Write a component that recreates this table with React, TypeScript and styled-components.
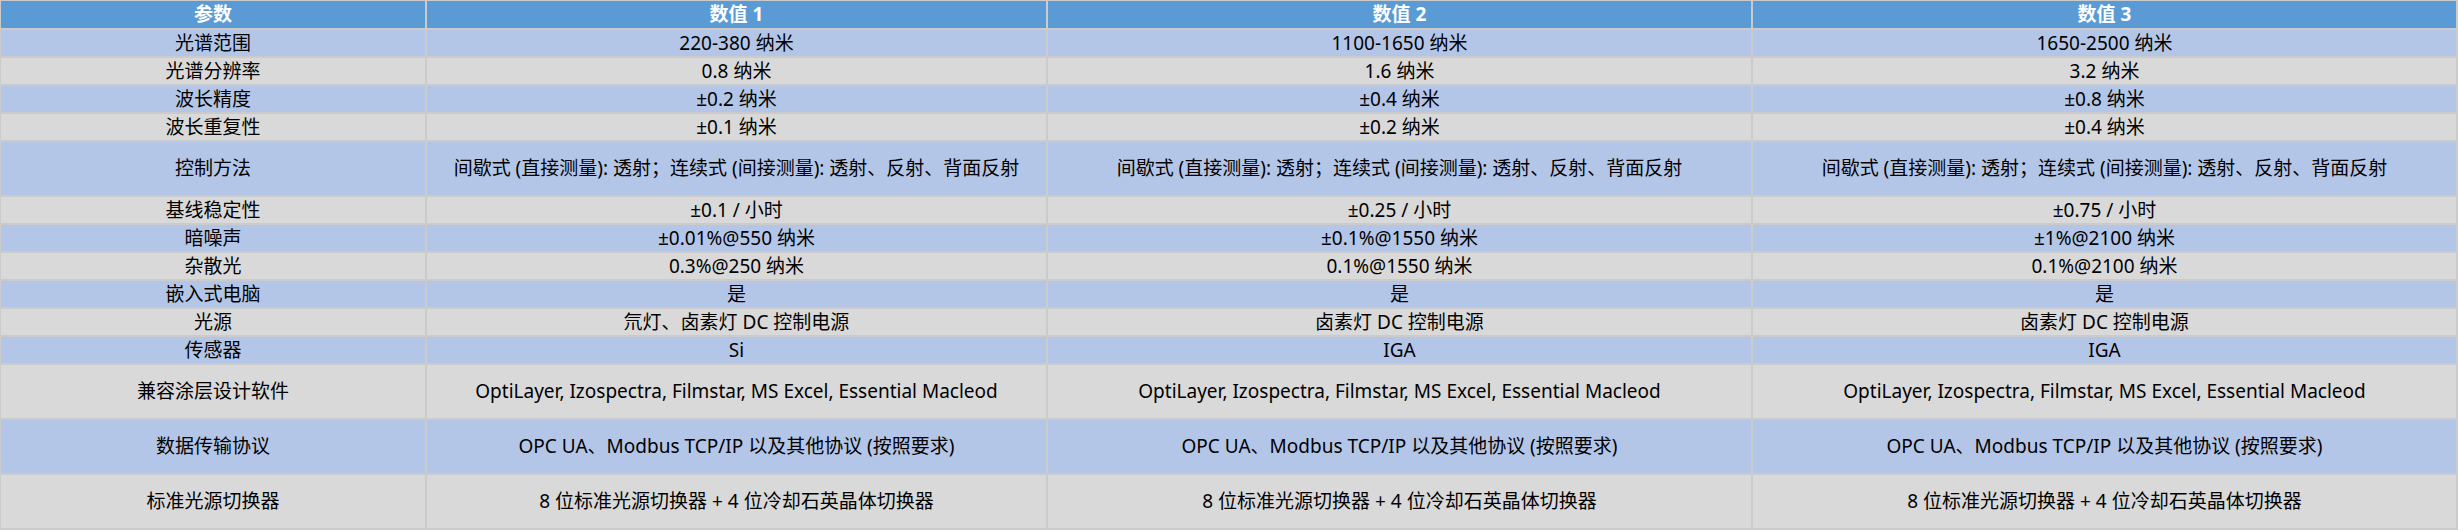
import styled, { createGlobalStyle } from "styled-components";

const GlobalStyle = createGlobalStyle`
  html, body {
    margin: 0;
    padding: 0;
    background: #ffffff;
  }
`;

const COLUMNS = "424px 619px 703px 703px";

const Table = styled.div`
  display: flex;
  flex-direction: column;
  gap: 2px;
  width: 2458px;
  box-sizing: border-box;
  padding: 1px 2px 2px 1px;
  background-color: #cbcbcb;
  font-family: "Noto Sans", "Noto Sans CJK SC", sans-serif;
  font-size: 19px;
  color: #000000;
`;

type rowProps = {
  height: number;
};

const Row = styled.div<rowProps>`
  display: grid;
  grid-template-columns: ${COLUMNS};
  gap: 2px;
  height: ${(props) => props.height}px;
`;

type cellProps = {
  background: string;
  header?: boolean;
};

const Cell = styled.div<cellProps>`
  display: flex;
  align-items: center;
  justify-content: center;
  text-align: center;
  white-space: nowrap;
  line-height: 1;
  background-color: ${(props) => props.background};
  color: ${(props) => (props.header ? "#ffffff" : "#000000")};
  font-weight: ${(props) => (props.header ? 700 : 400)};
`;

const HEADER_BG = "#5b9bd5";
const BLUE_BG = "#b4c6e7";
const GRAY_BG = "#d9d9d9";

const CONTROL = "间歇式 (直接测量): 透射；连续式 (间接测量): 透射、反射、背面反射";
const SOFTWARE = "OptiLayer, Izospectra, Filmstar, MS Excel, Essential Macleod";
const PROTOCOL = "OPC UA、Modbus TCP/IP 以及其他协议 (按照要求)";
const SWITCHER = "8 位标准光源切换器 + 4 位冷却石英晶体切换器";

const rows: { cells: string[]; tall?: boolean }[] = [
  { cells: ["光谱范围", "220-380 纳米", "1100-1650 纳米", "1650-2500 纳米"] },
  { cells: ["光谱分辨率", "0.8 纳米", "1.6 纳米", "3.2 纳米"] },
  { cells: ["波长精度", "±0.2 纳米", "±0.4 纳米", "±0.8 纳米"] },
  { cells: ["波长重复性", "±0.1 纳米", "±0.2 纳米", "±0.4 纳米"] },
  { cells: ["控制方法", CONTROL, CONTROL, CONTROL], tall: true },
  { cells: ["基线稳定性", "±0.1 / 小时", "±0.25 / 小时", "±0.75 / 小时"] },
  { cells: ["暗噪声", "±0.01%@550 纳米", "±0.1%@1550 纳米", "±1%@2100 纳米"] },
  { cells: ["杂散光", "0.3%@250 纳米", "0.1%@1550 纳米", "0.1%@2100 纳米"] },
  { cells: ["嵌入式电脑", "是", "是", "是"] },
  { cells: ["光源", "氘灯、卤素灯 DC 控制电源", "卤素灯 DC 控制电源", "卤素灯 DC 控制电源"] },
  { cells: ["传感器", "Si", "IGA", "IGA"] },
  { cells: ["兼容涂层设计软件", SOFTWARE, SOFTWARE, SOFTWARE], tall: true },
  { cells: ["数据传输协议", PROTOCOL, PROTOCOL, PROTOCOL], tall: true },
  { cells: ["标准光源切换器", SWITCHER, SWITCHER, SWITCHER], tall: true },
];

const headers = ["参数", "数值 1", "数值 2", "数值 3"];

const App = () => {
  return (
    <>
      <GlobalStyle />
      <Table>
        <Row height={27}>
          {headers.map((label) => (
            <Cell key={label} background={HEADER_BG} header>
              {label}
            </Cell>
          ))}
        </Row>
        {rows.map((row, index) => (
          <Row key={row.cells[0]} height={row.tall ? 53 : 26}>
            {row.cells.map((text, i) => (
              <Cell key={i} background={index % 2 === 0 ? BLUE_BG : GRAY_BG}>
                {text}
              </Cell>
            ))}
          </Row>
        ))}
      </Table>
    </>
  );
};

export default App;
